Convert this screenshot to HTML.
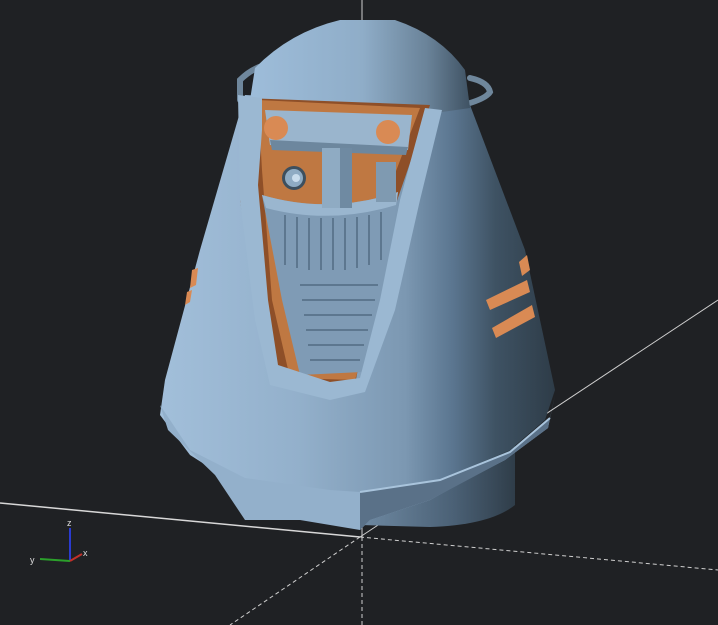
<!DOCTYPE html>
<html><head><style>html,body{margin:0;padding:0;background:#1f2124;width:718px;height:625px;overflow:hidden}svg{display:block}</style></head>
<body>
<svg width="718" height="625" viewBox="0 0 718 625" xmlns="http://www.w3.org/2000/svg">
<defs>
<linearGradient id="bg" x1="160" y1="0" x2="555" y2="0" gradientUnits="userSpaceOnUse">
<stop offset="0" stop-color="#a2bfda"/><stop offset="0.35" stop-color="#93b0cb"/><stop offset="0.62" stop-color="#7c98b2"/><stop offset="0.74" stop-color="#5b7690"/><stop offset="0.85" stop-color="#3e5263"/><stop offset="1" stop-color="#2e3c48"/>
</linearGradient>
<linearGradient id="dg" x1="255" y1="0" x2="470" y2="0" gradientUnits="userSpaceOnUse">
<stop offset="0" stop-color="#9dbcd9"/><stop offset="0.5" stop-color="#8fadc8"/><stop offset="0.8" stop-color="#6a8399"/><stop offset="1" stop-color="#3f5263"/>
</linearGradient>
<linearGradient id="cg" x1="360" y1="0" x2="515" y2="0" gradientUnits="userSpaceOnUse">
<stop offset="0" stop-color="#6f8aa3"/><stop offset="0.6" stop-color="#4b6176"/><stop offset="1" stop-color="#2f3d49"/>
</linearGradient>
</defs>
<rect width="718" height="625" fill="#1f2124"/>
<line x1="0" y1="503" x2="360" y2="537" stroke="#d8d8d8" stroke-width="1.5"/>
<line x1="360" y1="537" x2="718" y2="570" stroke="#cfcfcf" stroke-width="1" stroke-dasharray="4,3"/>
<line x1="360" y1="537" x2="718" y2="300" stroke="#cfcfcf" stroke-width="1"/>
<line x1="360" y1="537" x2="230" y2="625" stroke="#cfcfcf" stroke-width="1" stroke-dasharray="4,3"/>
<line x1="362" y1="0" x2="362" y2="537" stroke="#cfcfcf" stroke-width="1"/>
<line x1="362" y1="537" x2="362" y2="625" stroke="#cfcfcf" stroke-width="1" stroke-dasharray="4,3"/>
<path d="M240 100 L240 80 Q250 70 262 66 M470 78 Q488 82 490 92 Q484 102 440 110" fill="none" stroke="#6f879c" stroke-width="6" stroke-linecap="round"/>
<path d="M360 450 L515 440 L515 505 Q490 525 430 527 L360 525 Z" fill="url(#cg)"/>
<path d="M245 95 L470 105 L525 250 L555 390 L545 420 L510 450 L440 480 L360 510 L300 505 L245 490 L190 455 L160 415 L165 380 L200 250 Z" fill="url(#bg)"/>
<path d="M160 405 L190 450 L245 478 L330 490 L360 492 L440 480 L510 452 L550 418 L555 395 L548 428 L505 460 L470 478 L430 500 L370 520 L360 530 L300 520 L245 520 L215 475 L168 430 Z" fill="#93b0cb"/>
<path d="M360 492 L440 480 L510 452 L550 418 L548 428 L505 460 L430 500 L370 520 L360 530 Z" fill="#5a7188"/>
<path d="M360 492 L440 480 L510 452 L550 418" fill="none" stroke="#a9c4dc" stroke-width="2"/>
<path d="M255 68 Q290 32 340 20 L395 20 Q440 35 465 70 L470 108 L400 118 L300 110 L250 100 Z" fill="url(#dg)"/>
<path d="M245 98 L430 105 L380 250 L355 385 L320 392 L275 380 L260 330 L240 200 Z" fill="#8e4f28"/>
<path d="M258 100 L420 108 L385 200 L370 330 L355 380 L290 378 L272 300 L262 170 Z" fill="#bf7842"/>
<path d="M262 195 Q330 215 398 192 L385 300 L362 372 L300 375 L282 300 Z" fill="#7f9bb5"/>
<path d="M262 195 Q330 215 398 192 L396 205 Q330 225 266 208 Z" fill="#9ab6cf"/>
<g stroke="#5d778f" stroke-width="2">
<line x1="285" y1="215" x2="285" y2="265"/><line x1="297" y1="217" x2="297" y2="268"/><line x1="309" y1="218" x2="309" y2="270"/><line x1="321" y1="218" x2="321" y2="270"/><line x1="333" y1="218" x2="333" y2="270"/><line x1="345" y1="218" x2="345" y2="270"/><line x1="357" y1="217" x2="357" y2="268"/><line x1="369" y1="215" x2="369" y2="265"/><line x1="381" y1="212" x2="381" y2="260"/>
<line x1="300" y1="285" x2="378" y2="285"/><line x1="302" y1="300" x2="375" y2="300"/><line x1="304" y1="315" x2="372" y2="315"/><line x1="306" y1="330" x2="368" y2="330"/><line x1="308" y1="345" x2="364" y2="345"/><line x1="310" y1="360" x2="360" y2="360"/>
</g>
<path d="M265 110 L412 115 L408 150 L270 145 Z" fill="#9ab5cd"/>
<path d="M270 140 L408 147 L406 155 L272 150 Z" fill="#6d879e"/>
<rect x="322" y="148" width="30" height="60" fill="#8fabc3"/>
<rect x="340" y="148" width="12" height="60" fill="#6f8aa2"/>
<rect x="376" y="162" width="20" height="40" fill="#7f9ab1"/>
<circle cx="294" cy="178" r="12" fill="#3d4f5e"/><circle cx="294" cy="178" r="9" fill="#8fabc3"/><circle cx="296" cy="178" r="4" fill="#c9dcec"/>
<circle cx="276" cy="128" r="12" fill="#d98a54"/><circle cx="388" cy="132" r="12" fill="#d98a54"/>
<path d="M238 95 L262 98 L262 130 L258 185 L268 300 L278 365 L330 382 L360 378 L380 300 L400 200 L425 108 L442 110 L420 200 L395 310 L365 392 L330 400 L270 385 L255 320 L240 200 Z" fill="#9bb8d2"/>
<path d="M486 300 L527 280 L530 292 L490 310 Z" fill="#d98a54"/>
<path d="M492 328 L532 305 L535 317 L496 338 Z" fill="#d98a54"/>
<path d="M519 262 L527 255 L530 270 L522 276 Z" fill="#d98a54"/>
<path d="M192 270 L198 268 L196 285 L190 288 Z M187 292 L192 290 L190 302 L185 305 Z" fill="#d98a54"/>
<line x1="70" y1="528" x2="70" y2="561" stroke="#2a3bd0" stroke-width="2"/>
<line x1="70" y1="561" x2="40" y2="559" stroke="#2ba02b" stroke-width="2"/>
<line x1="70" y1="561" x2="82" y2="554" stroke="#c0302a" stroke-width="2"/>
<text x="67" y="526" fill="#ddd" font-family="Liberation Sans, sans-serif" font-size="9">z</text>
<text x="83" y="556" fill="#ddd" font-family="Liberation Sans, sans-serif" font-size="9">x</text>
<text x="30" y="563" fill="#ddd" font-family="Liberation Sans, sans-serif" font-size="9">y</text>
</svg>
</body></html>
